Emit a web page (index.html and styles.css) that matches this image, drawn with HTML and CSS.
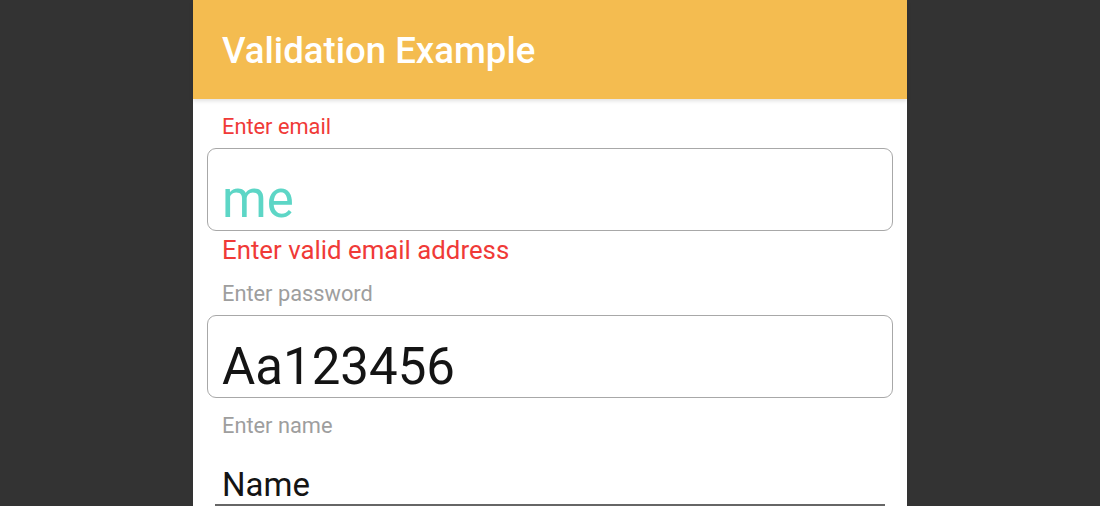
FILE: index.html
```html
<!DOCTYPE html>
<html>
<head>
<meta charset="utf-8">
<link rel="stylesheet" href="styles.css">
</head>
<body>
<div class="phone">
  <header class="appbar"><h1 class="title">Validation Example</h1></header>
  <main class="form">
    <div class="field">
      <div class="label label-error">Enter email</div>
      <div class="box"><span class="value value-teal">me</span></div>
      <div class="error">Enter valid email address</div>
    </div>
    <div class="field">
      <div class="label">Enter password</div>
      <div class="box"><span class="value">Aa123456</span></div>
    </div>
    <div class="field">
      <div class="label">Enter name</div>
      <div class="underline"><span class="value-small">Name</span></div>
    </div>
  </main>
</div>
</body>
</html>
```
FILE: styles.css
```css
html, body {
  margin: 0;
  padding: 0;
  height: 100%;
  background: #333333;
  overflow: hidden;
}
body {
  display: flex;
  justify-content: center;
  font-family: Roboto, "Noto Sans", sans-serif;
}
.phone {
  width: 714px;
  height: 506px;
  background: #ffffff;
  display: flex;
  flex-direction: column;
}
.appbar {
  height: 99px;
  background: #f4bc50;
  box-shadow: 0 2px 4px rgba(0,0,0,0.12);
  display: flex;
  align-items: center;
  padding-left: 29px;
  position: relative;
  z-index: 1;
}
.title {
  margin: 0;
  color: #ffffff;
  font-size: 36.6px;
  font-weight: 500;
  line-height: 1;
  padding-top: 3px;
}
.form {
  padding: 14px 14px 0 14px;
  display: flex;
  flex-direction: column;
}
.label {
  font-size: 21.8px;
  color: #9e9e9e;
  padding-left: 15px;
  line-height: 28px;
}
.label-error {
  color: #f03a37;
}
.box {
  margin-top: 7px;
  border: 1px solid #a8a8a8;
  border-radius: 9px;
  display: flex;
  align-items: flex-end;
  padding-left: 14px;
  box-sizing: border-box;
  height: 83px;
}
.value {
  font-size: 51px;
  line-height: 1;
  color: #141414;
  padding-bottom: 5px;
}
.value-teal {
  color: #5dd6c6;
}
.error {
  font-size: 25.8px;
  color: #f03a37;
  padding-left: 15px;
  line-height: 36px;
  padding-top: 1px;
  margin-bottom: 12px;
}
.field:nth-child(2) {
  margin-bottom: 14px;
}
.underline {
  margin: 16px 8px 0 8px;
  border-bottom: 2px solid #666;
  padding-left: 7px;
  height: 48px;
  display: flex;
  align-items: flex-end;
}
.value-small {
  font-size: 33px;
  color: #141414;
  line-height: 1;
  padding-bottom: 3px;
}
```
